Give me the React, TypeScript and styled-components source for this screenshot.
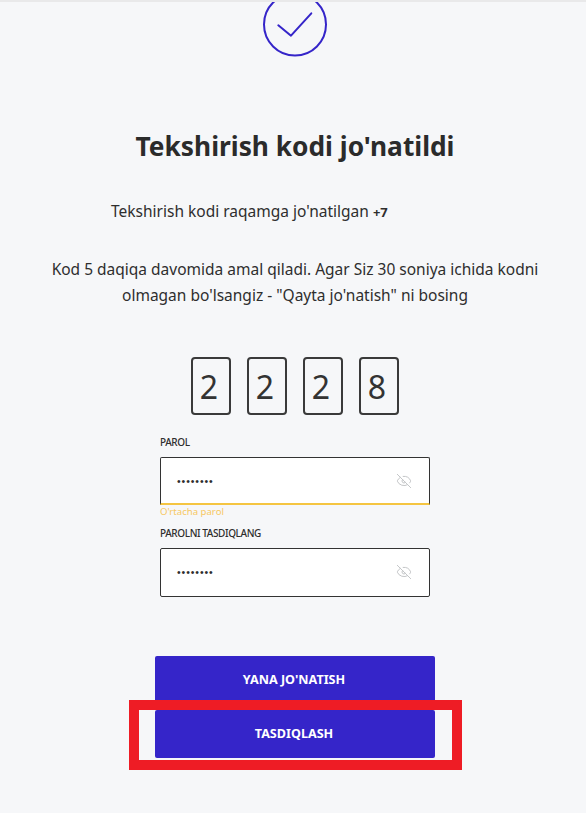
import React from "react";
import styled, { createGlobalStyle } from "styled-components";
import { EyeOff } from "lucide-react";

const GlobalStyle = createGlobalStyle`
  html, body {
    margin: 0;
    padding: 0;
    background: #f6f7f9;
  }
  * {
    box-sizing: border-box;
  }
`;

const digits = ["2", "2", "2", "8"];

const PasswordField: React.FC<{ label: string; warn?: boolean }> = ({ label, warn }) => (
  <Field>
    <FieldLabel>{label}</FieldLabel>
    <InputBox warn={warn}>
      <Dots>••••••••</Dots>
      <EyeOff size={16} color="#c4c6c8" strokeWidth={1.5} />
    </InputBox>
  </Field>
);

const App: React.FC = () => {
  return (
    <Page>
      <GlobalStyle />
      <TopShade />
      {/* Check icon, the circle is cut by the top of the page */}
      <CheckIcon viewBox="0 8 64 57" fill="none">
        <circle cx="32" cy="32.500" r="31" stroke="#3525c9" strokeWidth="2" />
        <path d="M15.300 33.300 L28 43.700 L48.300 21.300" stroke="#3525c9" strokeWidth="2" strokeLinecap="round" strokeLinejoin="round" />
      </CheckIcon>

      <Title>Tekshirish kodi jo'natildi</Title>
      <SentLine>
        Tekshirish kodi raqamga jo'natilgan <b>+7</b>
      </SentLine>
      <Hint>
        Kod 5 daqiqa davomida amal qiladi. Agar Siz 30 soniya ichida kodni
        <br />
        olmagan bo'lsangiz - "Qayta jo'natish" ni bosing
      </Hint>

      <CodeRow>
        {digits.map((d, i) => (
          <CodeCell key={i}>{d}</CodeCell>
        ))}
      </CodeRow>

      <PasswordField label="PAROL" warn />
      <Strength>O'rtacha parol</Strength>
      <PasswordField label="PAROLNI TASDIQLANG" />

      <Actions>
        <ActionButton>YANA JO'NATISH</ActionButton>
        <ActionButton>TASDIQLASH</ActionButton>
        <Highlight />
      </Actions>
    </Page>
  );
};

const Page = styled.div`
  position: relative;
  width: 586px;
  height: 813px;
  padding-left: 4px;
  overflow: hidden;
  background: #f6f7f9;
  color: #2e2e2e;
  font-family: "Noto Sans", "Open Sans", sans-serif;
  display: flex;
  flex-direction: column;
  align-items: center;
`;

const TopShade = styled.div`
  position: absolute;
  top: 0;
  left: 0;
  right: 0;
  height: 2px;
  background: #e9e9ea;
`;

const CheckIcon = styled.svg`
  display: block;
  width: 64px;
  height: 57px;
  flex: none;
`;

const Title = styled.h1`
  margin: 72px 0 0;
  height: 34px;
  font-size: 26.300px;
  line-height: 34px;
  font-weight: 700;
  color: #2b2b2b;
`;

const SentLine = styled.p`
  margin: 36px 0 0;
  align-self: flex-start;
  padding-left: 107px;
  height: 24px;
  font-size: 15.500px;
  line-height: 24px;

  b {
    font-weight: 700;
    font-size: 13px;
  }
`;

const Hint = styled.p`
  margin: 33px 0 0;
  height: 52px;
  font-size: 15.500px;
  line-height: 26px;
  text-align: center;
  white-space: nowrap;
`;

const CodeRow = styled.div`
  display: flex;
  gap: 16px;
  margin: 49px 0 20px;
`;

const CodeCell = styled.div`
  width: 40px;
  height: 58px;
  padding-right: 4px;
  border: 2px solid #3a3a3a;
  border-radius: 4px;
  display: flex;
  align-items: center;
  justify-content: center;
  font-size: 32px;
  color: #333;
`;

const Field = styled.div`
  width: 270px;
  display: flex;
  flex-direction: column;
`;

const FieldLabel = styled.label`
  height: 22px;
  font-size: 10px;
  letter-spacing: -0.400px;
  line-height: 14px;
  font-weight: 500;
  color: #2e2e2e;
`;

const InputBox = styled.div<{ warn?: boolean }>`
  height: ${(p) => (p.warn ? "48px" : "49px")};
  background: #fff;
  border: 1px solid #333;
  border-radius: 2px;
  border-bottom: ${(p) => (p.warn ? "2px solid #f5c542" : "1px solid #333")};
  ${(p) => p.warn && "border-bottom-left-radius: 0; border-bottom-right-radius: 0;"}
  padding: 0 17px ${(p) => (p.warn ? "0" : "2px")} 16px;
  display: flex;
  align-items: center;
  justify-content: space-between;
`;

const Dots = styled.span`
  font-family: "Liberation Sans", sans-serif;
  font-size: 10.500px;
  letter-spacing: 0.900px;
  color: #2e2e2e;
`;

const Strength = styled.div`
  width: 270px;
  height: 21px;
  font-size: 9.600px;
  line-height: 14px;
  color: #f7c863;
`;

const Actions = styled.div`
  position: relative;
  margin-top: 59px;
  width: 280px;
  display: flex;
  flex-direction: column;
  gap: 6px;
`;

const ActionButton = styled.button`
  height: 48px;
  padding: 0 2px 2px 0;
  border: none;
  border-radius: 2px;
  background: #3525c9;
  color: #fff;
  font-family: inherit;
  font-size: 12.600px;
  font-weight: 700;
`;

/* red annotation drawn over the screenshot */
const Highlight = styled.div`
  position: absolute;
  left: -26px;
  top: 44px;
  width: 333px;
  height: 70px;
  border: 10px solid #ee1c25;
  pointer-events: none;
`;

export default App;
